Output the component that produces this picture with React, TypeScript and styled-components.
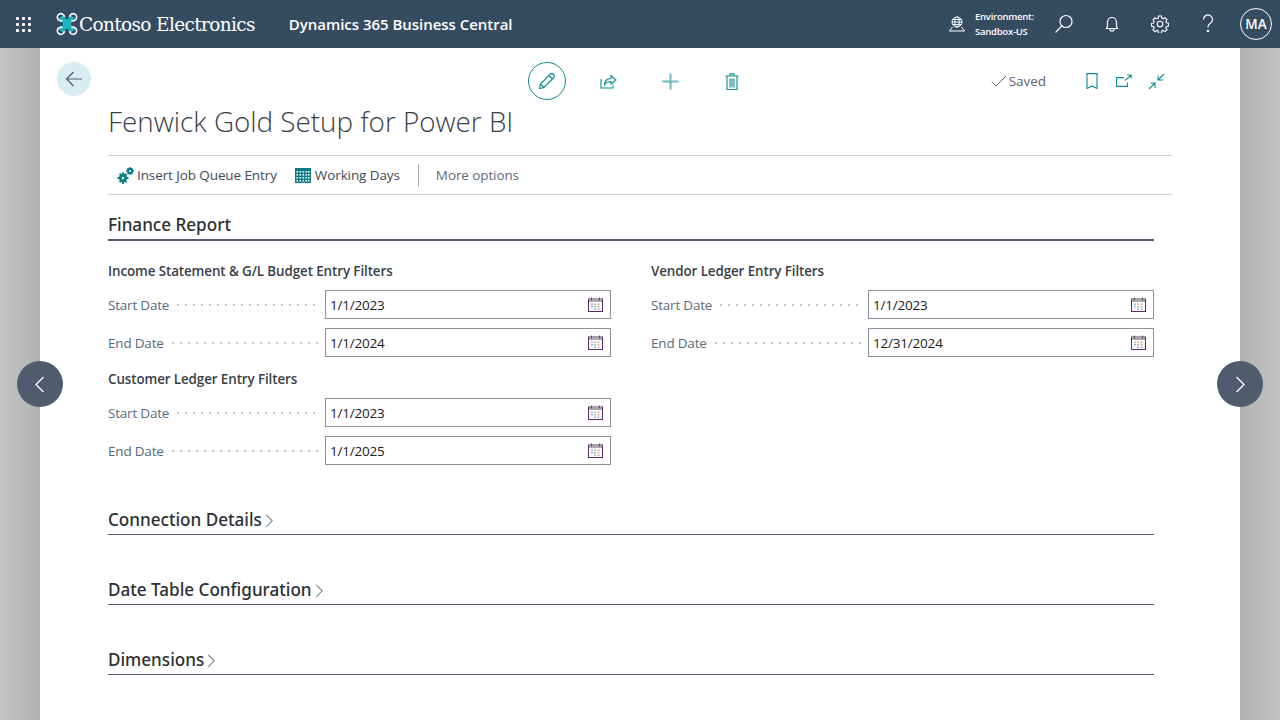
import React from 'react'
import styled, { createGlobalStyle } from 'styled-components'

const GlobalStyle = createGlobalStyle`
    html, body {
        margin: 0;
        padding: 0;
        height: 720px;
        overflow: hidden;
    }
    body {
        font-family: "Open Sans", "Noto Sans", sans-serif;
        color: #212121;
    }
`

const Page = styled.div`
    width: 1280px;
    height: 720px;
    display: flex;
    flex-direction: column;
    position: relative;
    overflow: hidden;
    background: linear-gradient(to right, #c4c4c4 0, #b1b1b1 40px, #b1b1b1 1240px, #c2c2c2 1280px);
`

const TopBar = styled.header`
    height: 48px;
    flex: none;
    background: #344b60;
    color: #fff;
    display: flex;
    align-items: center;
`

const Waffle = styled.div`
    width: 15px;
    margin-left: 16px;
    display: grid;
    grid-template-columns: repeat(3, 3px);
    gap: 3px;
    span {
        width: 3px;
        height: 3px;
        background: #fff;
        border-radius: 1px;
    }
`

const Logo = styled.div`
    margin-left: 24px;
    display: flex;
    align-items: center;
    font-family: "DejaVu Serif", "Liberation Serif", serif;
    font-size: 18.5px;
    letter-spacing: -0.65px;
    white-space: nowrap;
`

const ProductName = styled.div`
    margin-left: 34px;
    font-size: 15px;
    font-weight: 600;
    letter-spacing: -0.03px;
    white-space: nowrap;
`

const TopRight = styled.div`
    margin-left: auto;
    display: flex;
    align-items: center;
    padding-right: 8px;
`

const EnvBox = styled.div`
    display: flex;
    align-items: center;
    gap: 9px;
    margin-right: 7px;
`

const EnvText = styled.div`
    font-size: 9.5px;
    font-weight: 600;
    line-height: 15px;
    letter-spacing: -0.25px;
    width: 58px;
    white-space: nowrap;
`

const TopIcon = styled.button`
    width: 48px;
    height: 48px;
    padding: 0;
    border: 0;
    background: none;
    color: #fff;
    display: flex;
    align-items: center;
    justify-content: center;
`

const Avatar = styled.div`
    width: 32px;
    height: 32px;
    box-sizing: border-box;
    margin-left: 8px;
    border: 1px solid #fff;
    border-radius: 50%;
    display: flex;
    align-items: center;
    justify-content: center;
    font-size: 13.5px;
    font-weight: 600;
`

const Card = styled.main`
    flex: 1;
    margin: 0 40px;
    background: #fff;
    padding: 0 68px;
    display: flex;
    flex-direction: column;
`

const ActionRow = styled.div`
    height: 62px;
    margin-left: -51px;
    display: grid;
    grid-template-columns: 34px 1fr auto;
    align-items: center;
    position: relative;
`

const BackButton = styled.button`
    width: 34px;
    height: 34px;
    padding: 0;
    border: 0;
    border-radius: 50%;
    background: #d7edf1;
    color: #505c6d;
    display: flex;
    align-items: center;
    justify-content: center;
`

const ActionIcons = styled.div`
    position: absolute;
    left: 471px;
    top: 14px;
    display: flex;
    align-items: center;
`

const EditButton = styled.button`
    width: 38px;
    height: 38px;
    margin-right: 11px;
    padding: 0;
    border: 1px solid #0f8a8f;
    border-radius: 50%;
    background: #fff;
    color: #0f8a8f;
    display: flex;
    align-items: center;
    justify-content: center;
`

const ActionIcon = styled.button`
    width: 62px;
    height: 38px;
    padding: 0;
    border: 0;
    background: none;
    color: #0f8a8f;
    display: flex;
    align-items: center;
    justify-content: center;
`

const StatusGroup = styled.div`
    grid-column: 3;
    display: flex;
    align-items: center;
    margin-top: 4px;
    color: #0f8a8f;
`

const Saved = styled.div`
    display: flex;
    align-items: center;
    gap: 2px;
    margin-right: 30px;
    font-size: 13.5px;
    letter-spacing: -0.05px;
    color: #5a6373;
`

const SmallIcon = styled.span`
    width: 32px;
    display: flex;
    justify-content: center;
`

const Title = styled.h1`
    margin: -8px 0 0;
    height: 53px;
    font-size: 27.8px;
    line-height: 38px;
    font-weight: 300;
    color: #3a3f47;
    white-space: nowrap;
`

const Toolbar = styled.div`
    height: 38px;
    border-top: 1px solid #d3d4d6;
    border-bottom: 1px solid #d3d4d6;
    display: flex;
    align-items: center;
    padding-left: 9px;
    font-size: 13.5px;
    letter-spacing: -0.1px;
`

const ToolItem = styled.div`
    display: flex;
    align-items: center;
    gap: 3px;
    margin-right: 18px;
    color: #444a53;
    white-space: nowrap;
`

const ToolDivider = styled.div`
    width: 1px;
    height: 23px;
    background: #a9afb7;
    margin-right: 17px;
`

const MoreOptions = styled.div`
    color: #5f6b7d;
`

const Content = styled.div`
    width: 1046px;
`

const SectionHead = styled.div<{ $open?: boolean }>`
    display: flex;
    align-items: center;
    gap: 3px;
    height: ${p => (p.$open ? 46 : 29)}px;
    box-sizing: border-box;
    padding-top: ${p => (p.$open ? 16 : 0)}px;
    border-bottom: ${p => (p.$open ? 2 : 1)}px solid #505c6d;
    font-family: "Noto Sans", "Open Sans", sans-serif;
    font-size: 17.1px;
    font-weight: 500;
    line-height: 24px;
    color: #2b2f35;
    svg {
        margin-top: 2px;
        color: #7a7f87;
    }
`

const Collapsed = styled(SectionHead)`
    margin-bottom: 41px;
`

const Columns = styled.div`
    display: grid;
    grid-template-columns: 503px 503px;
    column-gap: 40px;
    padding-top: 19px;
    margin-bottom: 32px;
`

const GroupTitle = styled.div<{ $later?: boolean }>`
    height: 30px;
    margin-top: ${p => (p.$later ? 2 : 0)}px;
    line-height: 22px;
    font-size: 13.4px;
    font-weight: 600;
    letter-spacing: -0.1px;
    color: #3a3f47;
    white-space: nowrap;
`

const Field = styled.div`
    display: grid;
    grid-template-columns: 217px 286px;
    height: 38px;
    align-items: start;
`

const Label = styled.div`
    height: 29px;
    display: flex;
    align-items: center;
    gap: 8px;
    padding-right: 5px;
    box-sizing: border-box;
    font-size: 13.5px;
    letter-spacing: -0.2px;
    color: #5a6a7e;
    white-space: nowrap;
    &::after {
        content: '';
        flex: 1;
        height: 2px;
        background: radial-gradient(circle, #c4c6c9 0.8px, transparent 1px) -3px center / 8px 2px repeat-x;
    }
`

const DateBox = styled.div`
    height: 29px;
    box-sizing: border-box;
    border: 1px solid #8a919c;
    display: flex;
    align-items: center;
    justify-content: space-between;
    padding: 0 7px 0 4px;
    font-size: 13.5px;
    letter-spacing: -0.2px;
    color: #212121;
`

const NavButton = styled.button<{ $side: 'left' | 'right' }>`
    position: absolute;
    top: 361px;
    ${p => (p.$side === 'left' ? 'left: 17px;' : 'right: 17px;')}
    width: 46px;
    height: 46px;
    padding: 0;
    border: 0;
    border-radius: 50%;
    background: #505c6d;
    color: #fff;
    display: flex;
    align-items: center;
    justify-content: center;
`

const DroneLogo = () => (
    <svg width="24" height="24" viewBox="0 0 24 24" fill="none">
        <path d="M6 5l12 14M18 5L6 19" stroke="#1fb6c1" strokeWidth="5.5" />
        <path d="M7.5 8.5A3.6 3.6 0 1 1 9.5 4.8M16.5 8.5a3.6 3.6 0 1 0-2-3.7M7.5 15.5a3.6 3.6 0 1 0 2 3.7M16.5 15.5a3.6 3.6 0 1 1-2 3.7" stroke="#fff" strokeWidth="1.6" />
    </svg>
)

const GlobeIcon = () => (
    <svg width="18" height="16" viewBox="0 0 18 16" fill="none" stroke="#fff" strokeWidth="1">
        <circle cx="9" cy="6" r="5" />
        <ellipse cx="9" cy="6" rx="2.2" ry="5" />
        <path d="M4 6h10M4.8 3.5h8.4M4.8 8.5h8.4M4.5 11L1.5 15h15L13.5 11" />
    </svg>
)

const SearchIcon = () => (
    <svg width="20" height="20" viewBox="0 0 20 20" fill="none" stroke="#fff" strokeWidth="1.2">
        <circle cx="12" cy="7.5" r="6" />
        <path d="M7.8 11.8L1.5 18.5" />
    </svg>
)

const BellIcon = () => (
    <svg width="16" height="18" viewBox="0 0 16 18" fill="none" stroke="#fff" strokeWidth="1.2">
        <path d="M2.5 13.5c.8-1 1-2 1-3.500V7a4.500 4.500 0 0 1 9 0v3c0 1.500.2 2.500 1 3.500zM6 14a2 2 0 0 0 4 0" />
    </svg>
)

const GearIcon = () => (
    <svg width="18" height="18" viewBox="0 0 18 18" fill="none" stroke="#fff" strokeWidth="1.1">
        <circle cx="9" cy="9" r="2.8" />
        <path d="M7.600 1h2.800l.4 2.200 1.300.6 1.900-1.200 2 2-1.200 1.900.6 1.300 2.100.4v2.800l-2.100.4-.6 1.300 1.200 1.900-2 2-1.900-1.200-1.300.6-.4 2.200H7.600l-.4-2.200-1.300-.6L4 16.800l-2-2 1.200-1.900-.6-1.300-2.100-.4V8.400l2.100-.4.6-1.300L2 4.800l2-2 1.900 1.200 1.300-.6z" />
    </svg>
)

const HelpIcon = () => (
    <svg width="14" height="20" viewBox="0 0 14 20" fill="none" stroke="#fff" strokeWidth="1.2">
        <path d="M2.500 5.500a4.500 4.500 0 1 1 7 3.700C8 10.300 7 11 7 13v.5" />
        <circle cx="7" cy="17" r=".7" fill="#fff" />
    </svg>
)

const BackArrow = () => (
    <svg width="18" height="16" viewBox="0 0 18 16" fill="none" stroke="currentColor" strokeWidth="1.2">
        <path d="M17 8H1.500M8.500 1L1.500 8l7 7" />
    </svg>
)

const PencilIcon = () => (
    <svg width="18" height="18" viewBox="0 0 18 18" fill="none" stroke="currentColor" strokeWidth="1.1">
        <path d="M1.500 16.500l1-4.500L12.500 2a1.800 1.800 0 0 1 2.500 0l1 1a1.800 1.800 0 0 1 0 2.500L6 15.500zM2.500 12L6 15.500M11 3.500L14.500 7" />
    </svg>
)

const ShareIcon = () => (
    <svg width="17" height="15" viewBox="0 0 17 15" fill="none" stroke="currentColor" strokeWidth="1.1">
        <path d="M1 5v9h12v-3" />
        <path d="M4.500 11c0-4 2.500-6.500 6.500-6.500V1.500l5 4.500-5 4V7.500c-2.500 0-5 1-6.500 3.500z" />
    </svg>
)

const PlusIcon = () => (
    <svg width="17" height="17" viewBox="0 0 17 17" stroke="currentColor" strokeWidth="2" opacity="0.6">
        <path d="M8.500 0.500v16M0.500 8.500h16" />
    </svg>
)

const TrashIcon = () => (
    <svg width="14" height="17" viewBox="0 0 14 17" fill="none" stroke="currentColor" strokeWidth="1.1">
        <path d="M0.500 3h13M2 3v13.500h10V3M5 3V.9h4V3M5 5.500v9M7 5.500v9M9 5.500v9" />
    </svg>
)

const CheckIcon = () => (
    <svg width="16" height="12" viewBox="0 0 16 12" fill="none" stroke="#5a6373" strokeWidth="1">
        <path d="M1 6.500l4 4.500L15 1" />
    </svg>
)

const BookmarkIcon = () => (
    <svg width="12" height="16" viewBox="0 0 12 16" fill="none" stroke="currentColor" strokeWidth="1.1">
        <path d="M1 .6h10v14.800l-5-2.500-5 2.500z" />
    </svg>
)

const OpenIcon = () => (
    <svg width="16" height="14" viewBox="0 0 16 14" fill="none" stroke="currentColor" strokeWidth="1.1">
        <path d="M8 3.600H.6v8.800h10.800V8.500M9 6.500l6-5.200M11.200 1h4v3.600" />
    </svg>
)

const CollapseIcon = () => (
    <svg width="17" height="17" viewBox="0 0 17 17" fill="none" stroke="currentColor" strokeWidth="1.1">
        <path d="M16 1l-6 6M10 2.500V7h5M1 16l6-6M2.500 10H7v5" />
    </svg>
)

const GearsIcon = () => (
    <svg width="17" height="17" viewBox="0 0 17 17">
        <g fill="#0b7c84">
            <circle cx="6" cy="11" r="4" />
            <path d="M5 5.500h2V17H5zM.5 10h11v2H.5zM2 7.500l1.400-1.400 6.600 8.500-1.400 1.400zM10 7.500L8.600 6.100 2 14.600l1.400 1.400z" />
            <circle cx="13" cy="4" r="3" />
            <path d="M12.300 0h1.400v8h-1.400zM9 3.300h8v1.400H9zM10 1.500l1-1 5 6-1 1zM16 1.500l-1-1-5 6 1 1z" />
        </g>
        <circle cx="6" cy="11" r="1.300" fill="#fff" />
        <circle cx="13" cy="4" r="1" fill="#fff" />
    </svg>
)

const GridIcon = styled.svg`
    margin-right: 1px;
`

const CalendarGridIcon = () => (
    <GridIcon width="16" height="15" viewBox="0 0 16 15">
        <rect width="16" height="15" fill="#0b7c84" />
        {[2, 5, 8, 11].map(y =>
            [1.5, 4.5, 7.500, 10.500, 13].map(x => (
                <rect key={`${x}-${y}`} x={x} y={y + 1} width="1.600" height="1.700" fill="#e6f3f4" />
            ))
        )}
    </GridIcon>
)

const DateIcon = () => (
    <svg width="15" height="15" viewBox="0 0 15 15">
        <rect x="0.500" y="2" width="14" height="12.500" fill="#fff" stroke="#5a2a66" />
        <rect x="1" y="2.500" width="13" height="2.500" fill="#a9a9ab" />
        <path d="M3.500 0.500v3M11.500 0.500v3" stroke="#555" />
        <g fill="#8fbbe4">
            <rect x="3" y="6.500" width="2" height="1.500" />
            <rect x="3" y="9" width="2" height="1.500" />
            <rect x="6" y="11.500" width="2" height="1.500" />
        </g>
        <g fill="#e3b07a">
            <rect x="6" y="6.500" width="2" height="1.500" />
            <rect x="9.500" y="9" width="2" height="1.500" />
        </g>
        <g fill="#aab2c0">
            <rect x="9.500" y="6.500" width="2" height="1.500" />
            <rect x="6" y="9" width="2" height="1.500" />
            <rect x="9.500" y="11.500" width="2" height="1.500" />
        </g>
    </svg>
)

const Chevron = ({ size = 8, dir = 'right' }: { size?: number; dir?: 'left' | 'right' }) => (
    <svg width={size} height={size * 1.7} viewBox="0 0 10 17" fill="none" stroke="currentColor" strokeWidth="1.300">
        <path d={dir === 'right' ? 'M1.500 1l7.500 7.500L1.500 16' : 'M8.500 1L1 8.500 8.500 16'} />
    </svg>
)

type DateField = { label: string; value: string }

const DateRow = (props: DateField) => (
    <Field>
        <Label>{props.label}</Label>
        <DateBox>
            {props.value}
            <DateIcon />
        </DateBox>
    </Field>
)

const filters = {
    income: [
        { label: 'Start Date', value: '1/1/2023' },
        { label: 'End Date', value: '1/1/2024' },
    ],
    customer: [
        { label: 'Start Date', value: '1/1/2023' },
        { label: 'End Date', value: '1/1/2025' },
    ],
    vendor: [
        { label: 'Start Date', value: '1/1/2023' },
        { label: 'End Date', value: '12/31/2024' },
    ],
}

const App = () => {
    return (
        <Page>
            <GlobalStyle />
            <TopBar>
                <Waffle>
                    {Array.from({ length: 9 }).map((_, i) => (
                        <span key={i} />
                    ))}
                </Waffle>
                <Logo>
                    <DroneLogo />
                    Contoso Electronics
                </Logo>
                <ProductName>Dynamics 365 Business Central</ProductName>
                <TopRight>
                    <EnvBox>
                        <GlobeIcon />
                        <EnvText>
                            Environment:
                            <br />
                            Sandbox-US
                        </EnvText>
                    </EnvBox>
                    <TopIcon><SearchIcon /></TopIcon>
                    <TopIcon><BellIcon /></TopIcon>
                    <TopIcon><GearIcon /></TopIcon>
                    <TopIcon><HelpIcon /></TopIcon>
                    <Avatar>MA</Avatar>
                </TopRight>
            </TopBar>
            <Card>
                <ActionRow>
                    <BackButton><BackArrow /></BackButton>
                    <ActionIcons>
                        <EditButton><PencilIcon /></EditButton>
                        <ActionIcon><ShareIcon /></ActionIcon>
                        <ActionIcon><PlusIcon /></ActionIcon>
                        <ActionIcon><TrashIcon /></ActionIcon>
                    </ActionIcons>
                    <StatusGroup>
                        <Saved><CheckIcon />Saved</Saved>
                        <SmallIcon><BookmarkIcon /></SmallIcon>
                        <SmallIcon><OpenIcon /></SmallIcon>
                        <SmallIcon><CollapseIcon /></SmallIcon>
                    </StatusGroup>
                </ActionRow>
                <Title>Fenwick Gold Setup for Power BI</Title>
                <Toolbar>
                    <ToolItem><GearsIcon />Insert Job Queue Entry</ToolItem>
                    <ToolItem><CalendarGridIcon />Working Days</ToolItem>
                    <ToolDivider />
                    <MoreOptions>More options</MoreOptions>
                </Toolbar>
                <Content>
                    <SectionHead $open>Finance Report</SectionHead>
                    <Columns>
                        <div>
                            <GroupTitle>Income Statement &amp; G/L Budget Entry Filters</GroupTitle>
                            {filters.income.map((f, i) => <DateRow key={i} {...f} />)}
                            <GroupTitle $later>Customer Ledger Entry Filters</GroupTitle>
                            {filters.customer.map((f, i) => <DateRow key={i} {...f} />)}
                        </div>
                        <div>
                            <GroupTitle>Vendor Ledger Entry Filters</GroupTitle>
                            {filters.vendor.map((f, i) => <DateRow key={i} {...f} />)}
                        </div>
                    </Columns>
                    <Collapsed>Connection Details<Chevron /></Collapsed>
                    <Collapsed>Date Table Configuration<Chevron /></Collapsed>
                    <Collapsed>Dimensions<Chevron /></Collapsed>
                </Content>
            </Card>
            <NavButton $side="left"><Chevron size={10} dir="left" /></NavButton>
            <NavButton $side="right"><Chevron size={10} /></NavButton>
        </Page>
    )
}

export default App
